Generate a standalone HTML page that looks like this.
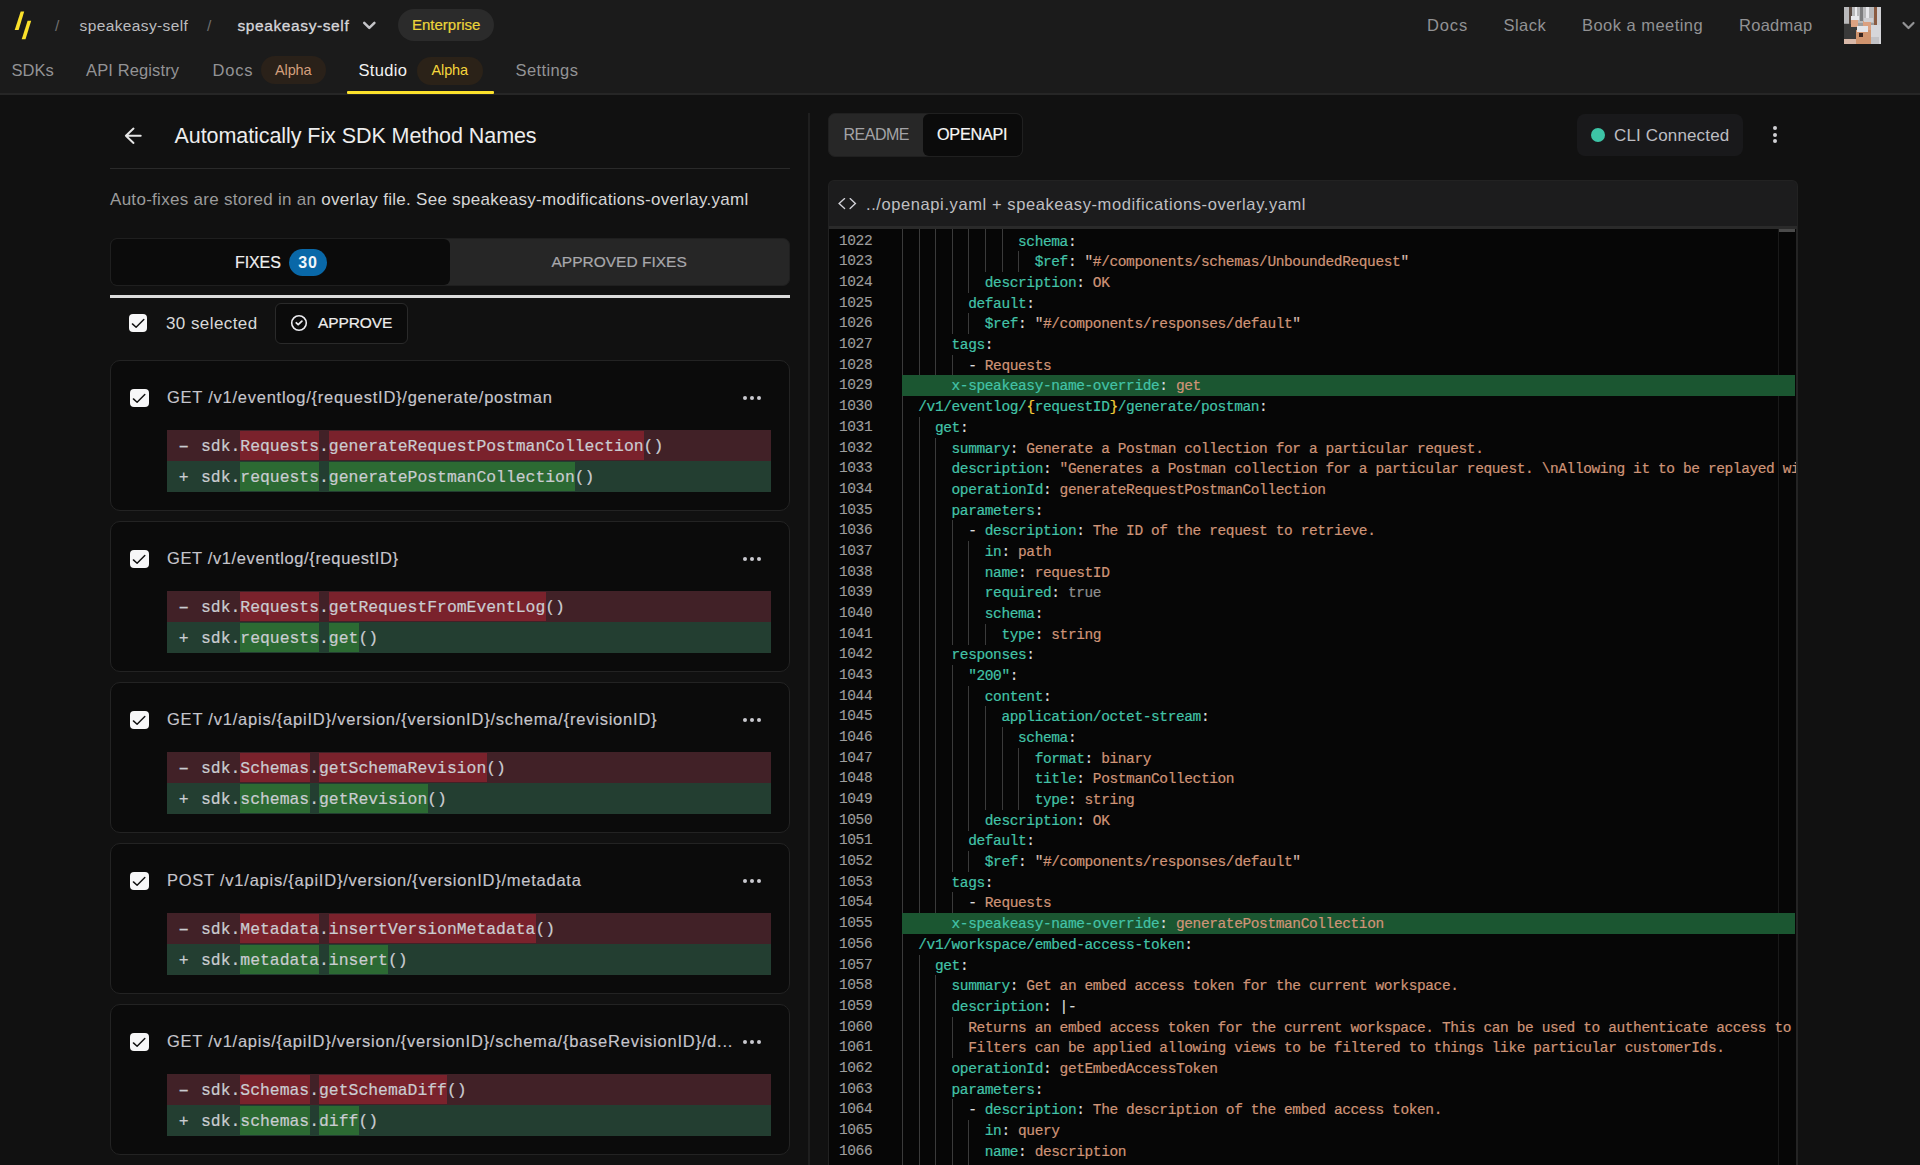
<!DOCTYPE html>
<html><head><meta charset="utf-8"><title>Speakeasy Studio</title>
<style>
*{box-sizing:border-box;margin:0;padding:0}
html,body{width:1920px;height:1165px;overflow:hidden;background:#111111;font-family:"Liberation Sans",sans-serif;}
.a{position:absolute;white-space:pre}
.top{position:absolute;left:0;top:0;width:1920px;height:93px;background:#1b1b1b}
.topb{position:absolute;left:0;top:93px;width:1920px;height:2px;background:#262626}
.t{position:absolute;white-space:pre;line-height:20px;height:20px}
.mono{font-family:"Liberation Mono",monospace}
.card{position:absolute;left:110px;width:680px;height:151px;background:#0b0b0b;border:1px solid #232323;border-radius:10px}
.cb{position:absolute;width:18.5px;height:18.3px;background:#f7f7f8;border-radius:4px}
.dots{position:absolute;width:19px;height:4px}
.dots i{position:absolute;top:0;width:4.4px;height:4.4px;border-radius:50%;background:#c9c9cf}
.diff{position:absolute;left:56px;width:604px;height:62px}
.row{position:absolute;left:0;width:604px;height:31px;font-family:"Liberation Mono",monospace;font-size:16.4px;line-height:31px;color:#caccd1;-webkit-text-stroke-width:0.2px;white-space:pre}
.rm{background:#412127}
.ad{background:#233e31}
.hr{position:absolute;top:1px;height:29px;background:#7a222c}
.hg{position:absolute;top:1px;height:29px;background:#2c6a33}
.code{position:absolute;left:829px;top:229px;width:967px;height:936px;background:#060606;overflow:hidden}
.ln{position:absolute;left:10px;width:40px;font-family:"Liberation Mono",monospace;font-size:14.5px;letter-spacing:-0.39px;-webkit-text-stroke-width:0.15px;color:#9d9d9d;white-space:pre;height:20.68px;line-height:20.68px}
.cl{position:absolute;left:73px;font-family:"Liberation Mono",monospace;font-size:14.5px;letter-spacing:-0.39px;-webkit-text-stroke-width:0.2px;color:#d4d4d4;white-space:pre;height:20.68px;line-height:20.68px}
.g{position:absolute;width:1px;background:#3a3a3a}
.k{color:#43c3a8}
.s{color:#cf9477}
.q{color:#d8bcb0}
.p{color:#dcdcdc}
.y{color:#f5cf3a}
.b{color:#8f8f8f}
</style></head>
<body>
<div class="top"></div><div class="topb"></div><svg class="a" style="left:0;top:0" width="40" height="46"><polygon points="20.7,11.5 24.2,11.5 18.65,30 14.7,30" fill="#fbe12b"/><polygon points="27.6,20.8 31.2,20.8 25.5,39.3 21.7,39.3" fill="#fbe12b"/></svg><div class="a" style="left:55px;top:13.50px;height:24px;line-height:24px;font-size:15.5px;color:#6f6f6f;letter-spacing:0px;font-weight:400;">/</div><div class="a" style="left:79.5px;top:13.50px;height:24px;line-height:24px;font-size:15.5px;color:#bcbcbf;letter-spacing:0.38px;font-weight:400;">speakeasy-self</div><div class="a" style="left:207px;top:13.50px;height:24px;line-height:24px;font-size:15.5px;color:#6f6f6f;letter-spacing:0px;font-weight:400;">/</div><div class="a" style="left:237.5px;top:13.50px;height:24px;line-height:24px;font-size:15.5px;color:#d6d6da;letter-spacing:0.6px;font-weight:400;-webkit-text-stroke:0.3px #d6d6da;">speakeasy-self</div><svg class="a" style="left:360px;top:19px" width="18" height="14"><polyline points="4.2,3.8 9.3,8.9 14.4,3.8" fill="none" stroke="#c4c4c8" stroke-width="2.5" stroke-linecap="round" stroke-linejoin="round"/></svg><div class="a" style="left:398px;top:9px;width:96px;height:32px;border-radius:16px;background:#2b2b2b"></div><div class="a" style="left:412px;top:12.80px;height:24px;line-height:24px;font-size:15px;color:#ecd53a;letter-spacing:0px;font-weight:400;-webkit-text-stroke:0.2px #ecd53a;">Enterprise</div><div class="a" style="left:1427px;top:11.50px;height:26px;line-height:26px;font-size:16.5px;color:#929294;letter-spacing:0.85px;font-weight:400;">Docs</div><div class="a" style="left:1503.5px;top:11.50px;height:26px;line-height:26px;font-size:16.5px;color:#929294;letter-spacing:0.45px;font-weight:400;">Slack</div><div class="a" style="left:1582px;top:11.50px;height:26px;line-height:26px;font-size:16.5px;color:#929294;letter-spacing:0.46px;font-weight:400;">Book a meeting</div><div class="a" style="left:1739px;top:11.50px;height:26px;line-height:26px;font-size:16.5px;color:#929294;letter-spacing:0.28px;font-weight:400;">Roadmap</div><svg class="a" style="left:1844px;top:7px" width="37" height="37" viewBox="0 0 37 37"><rect width="37" height="37" fill="#9c9c9c"/><rect x="0" y="0" width="37" height="16" fill="#b9b9bb"/><rect x="5" y="0" width="3" height="20" fill="#5a4a42"/><rect x="11" y="0" width="2" height="12" fill="#ececef"/><rect x="16" y="0" width="3" height="14" fill="#7d7d7f"/><rect x="22" y="0" width="3" height="15" fill="#e6e6ea"/><rect x="30" y="0" width="3" height="22" fill="#8a5a40"/><rect x="33" y="0" width="4" height="18" fill="#d0d0d4"/><rect x="0" y="17" width="13" height="20" fill="#3a3a3a"/><rect x="0" y="32" width="12" height="5" fill="#d8b8a8"/><rect x="7" y="9" width="8" height="4" fill="#e8e8ec"/><rect x="7" y="13" width="7" height="7" fill="#dca282"/><rect x="23" y="18" width="14" height="19" fill="#d6d6da"/><rect x="19" y="14" width="8" height="9" fill="#dba080"/><rect x="20" y="11" width="9" height="4" fill="#cfcfd3"/><rect x="12" y="23" width="15" height="14" fill="#d0946e"/><rect x="13" y="19" width="11" height="6" fill="#e4e4e8"/><rect x="15" y="26" width="4" height="4" fill="#3a2620"/><rect x="27" y="30" width="8" height="7" fill="#c2c2c6"/></svg><svg class="a" style="left:1900px;top:19px" width="18" height="14"><polyline points="3.5,4 8.5,9 13.5,4" fill="none" stroke="#939395" stroke-width="2.2" stroke-linecap="round" stroke-linejoin="round"/></svg><div class="a" style="left:11.5px;top:57.00px;height:26px;line-height:26px;font-size:16.5px;color:#939395;letter-spacing:0px;font-weight:400;">SDKs</div><div class="a" style="left:86px;top:57.00px;height:26px;line-height:26px;font-size:16.5px;color:#939395;letter-spacing:0.12px;font-weight:400;">API Registry</div><div class="a" style="left:212.5px;top:57.00px;height:26px;line-height:26px;font-size:16.5px;color:#939395;letter-spacing:0.77px;font-weight:400;">Docs</div><div class="a" style="left:261px;top:56px;width:65px;height:28px;border-radius:14px;background:#2a2119"></div><div class="a" style="left:275px;top:58.50px;height:23px;line-height:23px;font-size:14.5px;color:#d39f7d;letter-spacing:-0.12px;font-weight:400;">Alpha</div><div class="a" style="left:358.5px;top:57.00px;height:26px;line-height:26px;font-size:16.5px;color:#f2f2f2;letter-spacing:0.33px;font-weight:400;">Studio</div><div class="a" style="left:417px;top:56.5px;width:66px;height:28px;border-radius:14px;background:#2b2218"></div><div class="a" style="left:431.5px;top:58.50px;height:23px;line-height:23px;font-size:14.5px;color:#f5d53c;letter-spacing:-0.12px;font-weight:400;">Alpha</div><div class="a" style="left:515.5px;top:57.00px;height:26px;line-height:26px;font-size:16.5px;color:#939395;letter-spacing:0.4px;font-weight:400;">Settings</div><div class="a" style="left:347px;top:91px;width:147px;height:2.5px;background:#fbe12b;border-radius:1px"></div>
<svg class="a" style="left:122px;top:126px" width="22" height="20"><path d="M18.7,9.7 H3.9 M11.5,2.6 L3.9,9.7 L11.5,16.9" fill="none" stroke="#e6e6e6" stroke-width="2" stroke-linecap="round" stroke-linejoin="round"/></svg><div class="a" style="left:174.5px;top:119.00px;height:34px;line-height:34px;font-size:21.5px;color:#ededed;letter-spacing:-0.07px;font-weight:400;">Automatically Fix SDK Method Names</div><div class="a" style="left:110px;top:168px;width:680px;height:1px;background:#2a2a2a"></div><div class="a" style="left:110px;top:186px;height:28px;line-height:28px;font-size:17px;letter-spacing:0.29px;color:#9b9b9b">Auto-fixes are stored in an <span style="color:#d6d6d6">overlay file. See speakeasy-modifications-overlay.yaml</span></div><div class="a" style="left:110px;top:238px;width:680px;height:48px;border-radius:7px;background:#262626;border:1px solid #1f1f1f"></div><div class="a" style="left:111px;top:239px;width:339px;height:46px;border-radius:6px;background:#0b0b0b"></div><div class="a" style="left:235px;top:249.50px;height:25px;line-height:25px;font-size:16px;color:#efefef;letter-spacing:-0.1px;font-weight:400;-webkit-text-stroke:0.2px #efefef;">FIXES</div><div class="a" style="left:288.5px;top:249px;width:38px;height:26.5px;border-radius:13.5px;background:#0968a8"></div><div class="a" style="left:298.3px;top:249.50px;height:25px;line-height:25px;font-size:16px;color:#f2f6fa;letter-spacing:0.7px;font-weight:700;">30</div><div class="a" style="left:551.5px;top:250.00px;height:24px;line-height:24px;font-size:15.5px;color:#a8a8ac;letter-spacing:0px;font-weight:400;-webkit-text-stroke:0.2px #a8a8ac;">APPROVED FIXES</div><div class="a" style="left:110px;top:295px;width:680px;height:3px;background:#dcdcdc"></div><div class="cb" style="left:128.5px;top:313.5px"><svg width="19" height="19" style="position:absolute;left:0;top:0"><polyline points="3.4,9.9 7.1,13.3 14.8,5.6" fill="none" stroke="#111111" stroke-width="1.45" stroke-linecap="round" stroke-linejoin="round"/></svg></div><div class="a" style="left:166px;top:309.50px;height:27px;line-height:27px;font-size:17px;color:#d9d9d9;letter-spacing:0.42px;font-weight:400;">30 selected</div><div class="a" style="left:275px;top:303px;width:132.5px;height:41px;border-radius:6px;background:#0b0b0b;border:1px solid #2a2a2a"></div><svg class="a" style="left:289px;top:313.3px" width="20" height="20"><circle cx="10" cy="10" r="7.3" fill="none" stroke="#ececf0" stroke-width="1.6"/><polyline points="7.3,9.8 9.2,11.6 12.9,8.1" fill="none" stroke="#ececf0" stroke-width="1.8" stroke-linecap="round" stroke-linejoin="round"/></svg><div class="a" style="left:318px;top:311.00px;height:24px;line-height:24px;font-size:15.5px;color:#ededed;letter-spacing:-0.1px;font-weight:400;-webkit-text-stroke:0.2px #ededed;">APPROVE</div><div class="card" style="top:360px"><div class="cb" style="left:19px;top:28px"><svg width="19" height="19" style="position:absolute;left:0;top:0"><polyline points="3.4,9.9 7.1,13.3 14.8,5.6" fill="none" stroke="#111111" stroke-width="1.45" stroke-linecap="round" stroke-linejoin="round"/></svg></div><div class="a" style="left:56px;top:23.00px;height:26px;line-height:26px;font-size:16.5px;color:#c6c5cc;letter-spacing:0.75px;font-weight:400;-webkit-text-stroke:0.15px #c6c5cc;">GET /v1/eventlog/{requestID}/generate/postman</div><div class="dots" style="left:632px;top:35px"><i style="left:0"></i><i style="left:6.8px"></i><i style="left:13.6px"></i></div><div class="diff" style="top:69px"><div class="row rm" style="top:0px"><div class="hr" style="left:73.06px;width:79.32px"></div><div class="hr" style="left:161.62px;width:315.48px"></div><span style="position:absolute;left:11.82px;top:1.5px">−</span><span style="position:absolute;left:34.0px;top:0.5px">sdk.Requests.generateRequestPostmanCollection()</span></div><div class="row ad" style="top:31px"><div class="hg" style="left:73.06px;width:79.32px"></div><div class="hg" style="left:161.62px;width:246.60px"></div><span style="position:absolute;left:11.82px;top:0.5px">+</span><span style="position:absolute;left:34.0px;top:0.5px">sdk.requests.generatePostmanCollection()</span></div></div></div><div class="card" style="top:521px"><div class="cb" style="left:19px;top:28px"><svg width="19" height="19" style="position:absolute;left:0;top:0"><polyline points="3.4,9.9 7.1,13.3 14.8,5.6" fill="none" stroke="#111111" stroke-width="1.45" stroke-linecap="round" stroke-linejoin="round"/></svg></div><div class="a" style="left:56px;top:23.00px;height:26px;line-height:26px;font-size:16.5px;color:#c6c5cc;letter-spacing:0.62px;font-weight:400;-webkit-text-stroke:0.15px #c6c5cc;">GET /v1/eventlog/{requestID}</div><div class="dots" style="left:632px;top:35px"><i style="left:0"></i><i style="left:6.8px"></i><i style="left:13.6px"></i></div><div class="diff" style="top:69px"><div class="row rm" style="top:0px"><div class="hr" style="left:73.06px;width:79.32px"></div><div class="hr" style="left:161.62px;width:217.08px"></div><span style="position:absolute;left:11.82px;top:1.5px">−</span><span style="position:absolute;left:34.0px;top:0.5px">sdk.Requests.getRequestFromEventLog()</span></div><div class="row ad" style="top:31px"><div class="hg" style="left:73.06px;width:79.32px"></div><div class="hg" style="left:161.62px;width:30.12px"></div><span style="position:absolute;left:11.82px;top:0.5px">+</span><span style="position:absolute;left:34.0px;top:0.5px">sdk.requests.get()</span></div></div></div><div class="card" style="top:682px"><div class="cb" style="left:19px;top:28px"><svg width="19" height="19" style="position:absolute;left:0;top:0"><polyline points="3.4,9.9 7.1,13.3 14.8,5.6" fill="none" stroke="#111111" stroke-width="1.45" stroke-linecap="round" stroke-linejoin="round"/></svg></div><div class="a" style="left:56px;top:23.00px;height:26px;line-height:26px;font-size:16.5px;color:#c6c5cc;letter-spacing:0.78px;font-weight:400;-webkit-text-stroke:0.15px #c6c5cc;">GET /v1/apis/{apiID}/version/{versionID}/schema/{revisionID}</div><div class="dots" style="left:632px;top:35px"><i style="left:0"></i><i style="left:6.8px"></i><i style="left:13.6px"></i></div><div class="diff" style="top:69px"><div class="row rm" style="top:0px"><div class="hr" style="left:73.06px;width:69.48px"></div><div class="hr" style="left:151.78px;width:167.88px"></div><span style="position:absolute;left:11.82px;top:1.5px">−</span><span style="position:absolute;left:34.0px;top:0.5px">sdk.Schemas.getSchemaRevision()</span></div><div class="row ad" style="top:31px"><div class="hg" style="left:73.06px;width:69.48px"></div><div class="hg" style="left:151.78px;width:108.84px"></div><span style="position:absolute;left:11.82px;top:0.5px">+</span><span style="position:absolute;left:34.0px;top:0.5px">sdk.schemas.getRevision()</span></div></div></div><div class="card" style="top:843px"><div class="cb" style="left:19px;top:28px"><svg width="19" height="19" style="position:absolute;left:0;top:0"><polyline points="3.4,9.9 7.1,13.3 14.8,5.6" fill="none" stroke="#111111" stroke-width="1.45" stroke-linecap="round" stroke-linejoin="round"/></svg></div><div class="a" style="left:56px;top:23.00px;height:26px;line-height:26px;font-size:16.5px;color:#c6c5cc;letter-spacing:0.76px;font-weight:400;-webkit-text-stroke:0.15px #c6c5cc;">POST /v1/apis/{apiID}/version/{versionID}/metadata</div><div class="dots" style="left:632px;top:35px"><i style="left:0"></i><i style="left:6.8px"></i><i style="left:13.6px"></i></div><div class="diff" style="top:69px"><div class="row rm" style="top:0px"><div class="hr" style="left:73.06px;width:79.32px"></div><div class="hr" style="left:161.62px;width:207.24px"></div><span style="position:absolute;left:11.82px;top:1.5px">−</span><span style="position:absolute;left:34.0px;top:0.5px">sdk.Metadata.insertVersionMetadata()</span></div><div class="row ad" style="top:31px"><div class="hg" style="left:73.06px;width:79.32px"></div><div class="hg" style="left:161.62px;width:59.64px"></div><span style="position:absolute;left:11.82px;top:0.5px">+</span><span style="position:absolute;left:34.0px;top:0.5px">sdk.metadata.insert()</span></div></div></div><div class="card" style="top:1004px"><div class="cb" style="left:19px;top:28px"><svg width="19" height="19" style="position:absolute;left:0;top:0"><polyline points="3.4,9.9 7.1,13.3 14.8,5.6" fill="none" stroke="#111111" stroke-width="1.45" stroke-linecap="round" stroke-linejoin="round"/></svg></div><div class="a" style="left:56px;top:23.00px;height:26px;line-height:26px;font-size:16.5px;color:#c6c5cc;letter-spacing:0.765px;font-weight:400;-webkit-text-stroke:0.15px #c6c5cc;">GET /v1/apis/{apiID}/version/{versionID}/schema/{baseRevisionID}/d...</div><div class="dots" style="left:632px;top:35px"><i style="left:0"></i><i style="left:6.8px"></i><i style="left:13.6px"></i></div><div class="diff" style="top:69px"><div class="row rm" style="top:0px"><div class="hr" style="left:73.06px;width:69.48px"></div><div class="hr" style="left:151.78px;width:128.52px"></div><span style="position:absolute;left:11.82px;top:1.5px">−</span><span style="position:absolute;left:34.0px;top:0.5px">sdk.Schemas.getSchemaDiff()</span></div><div class="row ad" style="top:31px"><div class="hg" style="left:73.06px;width:69.48px"></div><div class="hg" style="left:151.78px;width:39.96px"></div><span style="position:absolute;left:11.82px;top:0.5px">+</span><span style="position:absolute;left:34.0px;top:0.5px">sdk.schemas.diff()</span></div></div></div><div class="a" style="left:808px;top:113px;width:2px;height:1052px;background:#1f1f1f"></div>
<div class="a" style="left:828px;top:113px;width:194.5px;height:43.5px;border-radius:7px;background:#272727;border:1px solid #202020"></div><div class="a" style="left:923px;top:114px;width:98.5px;height:41.5px;border-radius:6px;background:#0b0b0b"></div><div class="a" style="left:843.5px;top:122.00px;height:25px;line-height:25px;font-size:16px;color:#a3a3a6;letter-spacing:-0.5px;font-weight:400;">README</div><div class="a" style="left:937px;top:122.00px;height:25px;line-height:25px;font-size:16.2px;color:#f7f7f7;letter-spacing:-0.25px;font-weight:400;-webkit-text-stroke:0.2px #f7f7f7;">OPENAPI</div><div class="a" style="left:1577px;top:114px;width:166px;height:41.5px;border-radius:8px;background:#19191b"></div><div class="a" style="left:1591px;top:127.6px;width:14px;height:14px;border-radius:50%;background:#3dc4a6"></div><div class="a" style="left:1614px;top:121.50px;height:27px;line-height:27px;font-size:17px;color:#bdbdc1;letter-spacing:0.15px;font-weight:400;">CLI Connected</div><div class="a" style="left:1772.8px;top:125.8px;width:4.4px;height:4.4px;border-radius:50%;background:#d0d0d4"></div><div class="a" style="left:1772.8px;top:132.5px;width:4.4px;height:4.4px;border-radius:50%;background:#d0d0d4"></div><div class="a" style="left:1772.8px;top:139.1px;width:4.4px;height:4.4px;border-radius:50%;background:#d0d0d4"></div><div class="a" style="left:828px;top:180px;width:970px;height:49px;border-radius:6px 6px 0 0;background:#1c1c1d;border:1px solid #222;border-bottom:none"></div><div class="a" style="left:829px;top:226px;width:968px;height:3px;background:#2a2a2a"></div><svg class="a" style="left:836px;top:196px" width="24" height="16"><polyline points="8.6,2.6 3.1,7.5 8.6,12.6" fill="none" stroke="#d2d2d8" stroke-width="1.35" stroke-linecap="round" stroke-linejoin="miter"/><polyline points="14.1,2.6 19.4,7.5 14.1,12.6" fill="none" stroke="#d2d2d8" stroke-width="1.35" stroke-linecap="round" stroke-linejoin="miter"/></svg><div class="a" style="left:866px;top:191.00px;height:26px;line-height:26px;font-size:16.5px;color:#bfbfc2;letter-spacing:0.59px;font-weight:400;">../openapi.yaml + speakeasy-modifications-overlay.yaml</div><div class="a" style="left:828px;top:229px;width:1px;height:936px;background:#222"></div><div class="a" style="left:1796px;top:229px;width:1.5px;height:936px;background:#242424"></div><div class="code"><div class="a" style="left:949px;top:0;width:1px;height:936px;background:#1a1a1a"></div><div class="a" style="left:950px;top:0;width:16px;height:2.5px;background:#4a4a4a"></div><div class="g" style="left:73.00px;top:0.00px;height:22.68px"></div><div class="g" style="left:89.62px;top:0.00px;height:22.68px"></div><div class="g" style="left:106.24px;top:0.00px;height:22.68px"></div><div class="g" style="left:122.86px;top:0.00px;height:22.68px"></div><div class="g" style="left:139.48px;top:0.00px;height:22.68px"></div><div class="g" style="left:156.10px;top:0.00px;height:22.68px"></div><div class="g" style="left:172.72px;top:0.00px;height:22.68px"></div><div class="ln" style="top:1.70px">1022</div><div class="cl" style="left:189.04px;top:2.70px"><span class="k">schema</span><span class="p">:</span></div><div class="g" style="left:73.00px;top:22.38px;height:20.98px"></div><div class="g" style="left:89.62px;top:22.38px;height:20.98px"></div><div class="g" style="left:106.24px;top:22.38px;height:20.98px"></div><div class="g" style="left:122.86px;top:22.38px;height:20.98px"></div><div class="g" style="left:139.48px;top:22.38px;height:20.98px"></div><div class="g" style="left:156.10px;top:22.38px;height:20.98px"></div><div class="g" style="left:172.72px;top:22.38px;height:20.98px"></div><div class="g" style="left:189.34px;top:22.38px;height:20.98px"></div><div class="ln" style="top:22.38px">1023</div><div class="cl" style="left:205.66px;top:23.38px"><span class="k">$ref</span><span class="p">:</span><span class="p"> </span><span class="q">&quot;</span><span class="s">#/components/schemas/UnboundedRequest</span><span class="q">&quot;</span></div><div class="g" style="left:73.00px;top:43.06px;height:20.98px"></div><div class="g" style="left:89.62px;top:43.06px;height:20.98px"></div><div class="g" style="left:106.24px;top:43.06px;height:20.98px"></div><div class="g" style="left:122.86px;top:43.06px;height:20.98px"></div><div class="g" style="left:139.48px;top:43.06px;height:20.98px"></div><div class="ln" style="top:43.06px">1024</div><div class="cl" style="left:155.80px;top:44.06px"><span class="k">description</span><span class="p">:</span><span class="p"> </span><span class="s">OK</span></div><div class="g" style="left:73.00px;top:63.74px;height:20.98px"></div><div class="g" style="left:89.62px;top:63.74px;height:20.98px"></div><div class="g" style="left:106.24px;top:63.74px;height:20.98px"></div><div class="g" style="left:122.86px;top:63.74px;height:20.98px"></div><div class="ln" style="top:63.74px">1025</div><div class="cl" style="left:139.18px;top:64.74px"><span class="k">default</span><span class="p">:</span></div><div class="g" style="left:73.00px;top:84.42px;height:20.98px"></div><div class="g" style="left:89.62px;top:84.42px;height:20.98px"></div><div class="g" style="left:106.24px;top:84.42px;height:20.98px"></div><div class="g" style="left:122.86px;top:84.42px;height:20.98px"></div><div class="g" style="left:139.48px;top:84.42px;height:20.98px"></div><div class="ln" style="top:84.42px">1026</div><div class="cl" style="left:155.80px;top:85.42px"><span class="k">$ref</span><span class="p">:</span><span class="p"> </span><span class="q">&quot;</span><span class="s">#/components/responses/default</span><span class="q">&quot;</span></div><div class="g" style="left:73.00px;top:105.10px;height:20.98px"></div><div class="g" style="left:89.62px;top:105.10px;height:20.98px"></div><div class="g" style="left:106.24px;top:105.10px;height:20.98px"></div><div class="ln" style="top:105.10px">1027</div><div class="cl" style="left:122.56px;top:106.10px"><span class="k">tags</span><span class="p">:</span></div><div class="g" style="left:73.00px;top:125.78px;height:20.98px"></div><div class="g" style="left:89.62px;top:125.78px;height:20.98px"></div><div class="g" style="left:106.24px;top:125.78px;height:20.98px"></div><div class="g" style="left:122.86px;top:125.78px;height:20.98px"></div><div class="ln" style="top:125.78px">1028</div><div class="cl" style="left:139.18px;top:126.78px"><span class="p">- </span><span class="s">Requests</span></div><div class="a" style="left:73.0px;top:146.46px;width:893px;height:20.68px;background:#1b5631"></div><div class="ln" style="top:146.46px">1029</div><div class="cl" style="left:122.56px;top:147.46px"><span class="k">x-speakeasy-name-override</span><span class="p">:</span><span class="p"> </span><span class="s">get</span></div><div class="g" style="left:73.00px;top:167.14px;height:20.98px"></div><div class="ln" style="top:167.14px">1030</div><div class="cl" style="left:89.32px;top:168.14px"><span class="k">/v1/eventlog/</span><span class="y">{</span><span class="k">requestID</span><span class="y">}</span><span class="k">/generate/postman</span><span class="p">:</span></div><div class="g" style="left:73.00px;top:187.82px;height:20.98px"></div><div class="g" style="left:89.62px;top:187.82px;height:20.98px"></div><div class="ln" style="top:187.82px">1031</div><div class="cl" style="left:105.94px;top:188.82px"><span class="k">get</span><span class="p">:</span></div><div class="g" style="left:73.00px;top:208.50px;height:20.98px"></div><div class="g" style="left:89.62px;top:208.50px;height:20.98px"></div><div class="g" style="left:106.24px;top:208.50px;height:20.98px"></div><div class="ln" style="top:208.50px">1032</div><div class="cl" style="left:122.56px;top:209.50px"><span class="k">summary</span><span class="p">:</span><span class="p"> </span><span class="s">Generate a Postman collection for a particular request.</span></div><div class="g" style="left:73.00px;top:229.18px;height:20.98px"></div><div class="g" style="left:89.62px;top:229.18px;height:20.98px"></div><div class="g" style="left:106.24px;top:229.18px;height:20.98px"></div><div class="ln" style="top:229.18px">1033</div><div class="cl" style="left:122.56px;top:230.18px"><span class="k">description</span><span class="p">:</span><span class="p"> </span><span class="s">&quot;Generates a Postman collection for a particular request. \nAllowing it to be replayed with the original request details.</span></div><div class="g" style="left:73.00px;top:249.86px;height:20.98px"></div><div class="g" style="left:89.62px;top:249.86px;height:20.98px"></div><div class="g" style="left:106.24px;top:249.86px;height:20.98px"></div><div class="ln" style="top:249.86px">1034</div><div class="cl" style="left:122.56px;top:250.86px"><span class="k">operationId</span><span class="p">:</span><span class="p"> </span><span class="s">generateRequestPostmanCollection</span></div><div class="g" style="left:73.00px;top:270.54px;height:20.98px"></div><div class="g" style="left:89.62px;top:270.54px;height:20.98px"></div><div class="g" style="left:106.24px;top:270.54px;height:20.98px"></div><div class="ln" style="top:270.54px">1035</div><div class="cl" style="left:122.56px;top:271.54px"><span class="k">parameters</span><span class="p">:</span></div><div class="g" style="left:73.00px;top:291.22px;height:20.98px"></div><div class="g" style="left:89.62px;top:291.22px;height:20.98px"></div><div class="g" style="left:106.24px;top:291.22px;height:20.98px"></div><div class="g" style="left:122.86px;top:291.22px;height:20.98px"></div><div class="ln" style="top:291.22px">1036</div><div class="cl" style="left:139.18px;top:292.22px"><span class="p">- </span><span class="k">description</span><span class="p">:</span><span class="p"> </span><span class="s">The ID of the request to retrieve.</span></div><div class="g" style="left:73.00px;top:311.90px;height:20.98px"></div><div class="g" style="left:89.62px;top:311.90px;height:20.98px"></div><div class="g" style="left:106.24px;top:311.90px;height:20.98px"></div><div class="g" style="left:122.86px;top:311.90px;height:20.98px"></div><div class="g" style="left:139.48px;top:311.90px;height:20.98px"></div><div class="ln" style="top:311.90px">1037</div><div class="cl" style="left:155.80px;top:312.90px"><span class="k">in</span><span class="p">:</span><span class="p"> </span><span class="s">path</span></div><div class="g" style="left:73.00px;top:332.58px;height:20.98px"></div><div class="g" style="left:89.62px;top:332.58px;height:20.98px"></div><div class="g" style="left:106.24px;top:332.58px;height:20.98px"></div><div class="g" style="left:122.86px;top:332.58px;height:20.98px"></div><div class="g" style="left:139.48px;top:332.58px;height:20.98px"></div><div class="ln" style="top:332.58px">1038</div><div class="cl" style="left:155.80px;top:333.58px"><span class="k">name</span><span class="p">:</span><span class="p"> </span><span class="s">requestID</span></div><div class="g" style="left:73.00px;top:353.26px;height:20.98px"></div><div class="g" style="left:89.62px;top:353.26px;height:20.98px"></div><div class="g" style="left:106.24px;top:353.26px;height:20.98px"></div><div class="g" style="left:122.86px;top:353.26px;height:20.98px"></div><div class="g" style="left:139.48px;top:353.26px;height:20.98px"></div><div class="ln" style="top:353.26px">1039</div><div class="cl" style="left:155.80px;top:354.26px"><span class="k">required</span><span class="p">:</span><span class="p"> </span><span class="b">true</span></div><div class="g" style="left:73.00px;top:373.94px;height:20.98px"></div><div class="g" style="left:89.62px;top:373.94px;height:20.98px"></div><div class="g" style="left:106.24px;top:373.94px;height:20.98px"></div><div class="g" style="left:122.86px;top:373.94px;height:20.98px"></div><div class="g" style="left:139.48px;top:373.94px;height:20.98px"></div><div class="ln" style="top:373.94px">1040</div><div class="cl" style="left:155.80px;top:374.94px"><span class="k">schema</span><span class="p">:</span></div><div class="g" style="left:73.00px;top:394.62px;height:20.98px"></div><div class="g" style="left:89.62px;top:394.62px;height:20.98px"></div><div class="g" style="left:106.24px;top:394.62px;height:20.98px"></div><div class="g" style="left:122.86px;top:394.62px;height:20.98px"></div><div class="g" style="left:139.48px;top:394.62px;height:20.98px"></div><div class="g" style="left:156.10px;top:394.62px;height:20.98px"></div><div class="ln" style="top:394.62px">1041</div><div class="cl" style="left:172.42px;top:395.62px"><span class="k">type</span><span class="p">:</span><span class="p"> </span><span class="s">string</span></div><div class="g" style="left:73.00px;top:415.30px;height:20.98px"></div><div class="g" style="left:89.62px;top:415.30px;height:20.98px"></div><div class="g" style="left:106.24px;top:415.30px;height:20.98px"></div><div class="ln" style="top:415.30px">1042</div><div class="cl" style="left:122.56px;top:416.30px"><span class="k">responses</span><span class="p">:</span></div><div class="g" style="left:73.00px;top:435.98px;height:20.98px"></div><div class="g" style="left:89.62px;top:435.98px;height:20.98px"></div><div class="g" style="left:106.24px;top:435.98px;height:20.98px"></div><div class="g" style="left:122.86px;top:435.98px;height:20.98px"></div><div class="ln" style="top:435.98px">1043</div><div class="cl" style="left:139.18px;top:436.98px"><span class="k">&quot;200&quot;</span><span class="p">:</span></div><div class="g" style="left:73.00px;top:456.66px;height:20.98px"></div><div class="g" style="left:89.62px;top:456.66px;height:20.98px"></div><div class="g" style="left:106.24px;top:456.66px;height:20.98px"></div><div class="g" style="left:122.86px;top:456.66px;height:20.98px"></div><div class="g" style="left:139.48px;top:456.66px;height:20.98px"></div><div class="ln" style="top:456.66px">1044</div><div class="cl" style="left:155.80px;top:457.66px"><span class="k">content</span><span class="p">:</span></div><div class="g" style="left:73.00px;top:477.34px;height:20.98px"></div><div class="g" style="left:89.62px;top:477.34px;height:20.98px"></div><div class="g" style="left:106.24px;top:477.34px;height:20.98px"></div><div class="g" style="left:122.86px;top:477.34px;height:20.98px"></div><div class="g" style="left:139.48px;top:477.34px;height:20.98px"></div><div class="g" style="left:156.10px;top:477.34px;height:20.98px"></div><div class="ln" style="top:477.34px">1045</div><div class="cl" style="left:172.42px;top:478.34px"><span class="k">application/octet-stream</span><span class="p">:</span></div><div class="g" style="left:73.00px;top:498.02px;height:20.98px"></div><div class="g" style="left:89.62px;top:498.02px;height:20.98px"></div><div class="g" style="left:106.24px;top:498.02px;height:20.98px"></div><div class="g" style="left:122.86px;top:498.02px;height:20.98px"></div><div class="g" style="left:139.48px;top:498.02px;height:20.98px"></div><div class="g" style="left:156.10px;top:498.02px;height:20.98px"></div><div class="g" style="left:172.72px;top:498.02px;height:20.98px"></div><div class="ln" style="top:498.02px">1046</div><div class="cl" style="left:189.04px;top:499.02px"><span class="k">schema</span><span class="p">:</span></div><div class="g" style="left:73.00px;top:518.70px;height:20.98px"></div><div class="g" style="left:89.62px;top:518.70px;height:20.98px"></div><div class="g" style="left:106.24px;top:518.70px;height:20.98px"></div><div class="g" style="left:122.86px;top:518.70px;height:20.98px"></div><div class="g" style="left:139.48px;top:518.70px;height:20.98px"></div><div class="g" style="left:156.10px;top:518.70px;height:20.98px"></div><div class="g" style="left:172.72px;top:518.70px;height:20.98px"></div><div class="g" style="left:189.34px;top:518.70px;height:20.98px"></div><div class="ln" style="top:518.70px">1047</div><div class="cl" style="left:205.66px;top:519.70px"><span class="k">format</span><span class="p">:</span><span class="p"> </span><span class="s">binary</span></div><div class="g" style="left:73.00px;top:539.38px;height:20.98px"></div><div class="g" style="left:89.62px;top:539.38px;height:20.98px"></div><div class="g" style="left:106.24px;top:539.38px;height:20.98px"></div><div class="g" style="left:122.86px;top:539.38px;height:20.98px"></div><div class="g" style="left:139.48px;top:539.38px;height:20.98px"></div><div class="g" style="left:156.10px;top:539.38px;height:20.98px"></div><div class="g" style="left:172.72px;top:539.38px;height:20.98px"></div><div class="g" style="left:189.34px;top:539.38px;height:20.98px"></div><div class="ln" style="top:539.38px">1048</div><div class="cl" style="left:205.66px;top:540.38px"><span class="k">title</span><span class="p">:</span><span class="p"> </span><span class="s">PostmanCollection</span></div><div class="g" style="left:73.00px;top:560.06px;height:20.98px"></div><div class="g" style="left:89.62px;top:560.06px;height:20.98px"></div><div class="g" style="left:106.24px;top:560.06px;height:20.98px"></div><div class="g" style="left:122.86px;top:560.06px;height:20.98px"></div><div class="g" style="left:139.48px;top:560.06px;height:20.98px"></div><div class="g" style="left:156.10px;top:560.06px;height:20.98px"></div><div class="g" style="left:172.72px;top:560.06px;height:20.98px"></div><div class="g" style="left:189.34px;top:560.06px;height:20.98px"></div><div class="ln" style="top:560.06px">1049</div><div class="cl" style="left:205.66px;top:561.06px"><span class="k">type</span><span class="p">:</span><span class="p"> </span><span class="s">string</span></div><div class="g" style="left:73.00px;top:580.74px;height:20.98px"></div><div class="g" style="left:89.62px;top:580.74px;height:20.98px"></div><div class="g" style="left:106.24px;top:580.74px;height:20.98px"></div><div class="g" style="left:122.86px;top:580.74px;height:20.98px"></div><div class="g" style="left:139.48px;top:580.74px;height:20.98px"></div><div class="ln" style="top:580.74px">1050</div><div class="cl" style="left:155.80px;top:581.74px"><span class="k">description</span><span class="p">:</span><span class="p"> </span><span class="s">OK</span></div><div class="g" style="left:73.00px;top:601.42px;height:20.98px"></div><div class="g" style="left:89.62px;top:601.42px;height:20.98px"></div><div class="g" style="left:106.24px;top:601.42px;height:20.98px"></div><div class="g" style="left:122.86px;top:601.42px;height:20.98px"></div><div class="ln" style="top:601.42px">1051</div><div class="cl" style="left:139.18px;top:602.42px"><span class="k">default</span><span class="p">:</span></div><div class="g" style="left:73.00px;top:622.10px;height:20.98px"></div><div class="g" style="left:89.62px;top:622.10px;height:20.98px"></div><div class="g" style="left:106.24px;top:622.10px;height:20.98px"></div><div class="g" style="left:122.86px;top:622.10px;height:20.98px"></div><div class="g" style="left:139.48px;top:622.10px;height:20.98px"></div><div class="ln" style="top:622.10px">1052</div><div class="cl" style="left:155.80px;top:623.10px"><span class="k">$ref</span><span class="p">:</span><span class="p"> </span><span class="q">&quot;</span><span class="s">#/components/responses/default</span><span class="q">&quot;</span></div><div class="g" style="left:73.00px;top:642.78px;height:20.98px"></div><div class="g" style="left:89.62px;top:642.78px;height:20.98px"></div><div class="g" style="left:106.24px;top:642.78px;height:20.98px"></div><div class="ln" style="top:642.78px">1053</div><div class="cl" style="left:122.56px;top:643.78px"><span class="k">tags</span><span class="p">:</span></div><div class="g" style="left:73.00px;top:663.46px;height:20.98px"></div><div class="g" style="left:89.62px;top:663.46px;height:20.98px"></div><div class="g" style="left:106.24px;top:663.46px;height:20.98px"></div><div class="g" style="left:122.86px;top:663.46px;height:20.98px"></div><div class="ln" style="top:663.46px">1054</div><div class="cl" style="left:139.18px;top:664.46px"><span class="p">- </span><span class="s">Requests</span></div><div class="a" style="left:73.0px;top:684.14px;width:893px;height:20.68px;background:#1b5631"></div><div class="ln" style="top:684.14px">1055</div><div class="cl" style="left:122.56px;top:685.14px"><span class="k">x-speakeasy-name-override</span><span class="p">:</span><span class="p"> </span><span class="s">generatePostmanCollection</span></div><div class="g" style="left:73.00px;top:704.82px;height:20.98px"></div><div class="ln" style="top:704.82px">1056</div><div class="cl" style="left:89.32px;top:705.82px"><span class="k">/v1/workspace/embed-access-token</span><span class="p">:</span></div><div class="g" style="left:73.00px;top:725.50px;height:20.98px"></div><div class="g" style="left:89.62px;top:725.50px;height:20.98px"></div><div class="ln" style="top:725.50px">1057</div><div class="cl" style="left:105.94px;top:726.50px"><span class="k">get</span><span class="p">:</span></div><div class="g" style="left:73.00px;top:746.18px;height:20.98px"></div><div class="g" style="left:89.62px;top:746.18px;height:20.98px"></div><div class="g" style="left:106.24px;top:746.18px;height:20.98px"></div><div class="ln" style="top:746.18px">1058</div><div class="cl" style="left:122.56px;top:747.18px"><span class="k">summary</span><span class="p">:</span><span class="p"> </span><span class="s">Get an embed access token for the current workspace.</span></div><div class="g" style="left:73.00px;top:766.86px;height:20.98px"></div><div class="g" style="left:89.62px;top:766.86px;height:20.98px"></div><div class="g" style="left:106.24px;top:766.86px;height:20.98px"></div><div class="ln" style="top:766.86px">1059</div><div class="cl" style="left:122.56px;top:767.86px"><span class="k">description</span><span class="p">:</span><span class="p"> </span><span class="p">|-</span></div><div class="g" style="left:73.00px;top:787.54px;height:20.98px"></div><div class="g" style="left:89.62px;top:787.54px;height:20.98px"></div><div class="g" style="left:106.24px;top:787.54px;height:20.98px"></div><div class="g" style="left:122.86px;top:787.54px;height:20.98px"></div><div class="ln" style="top:787.54px">1060</div><div class="cl" style="left:139.18px;top:788.54px"><span class="s">Returns an embed access token for the current workspace. This can be used to authenticate access to a workspace.</span></div><div class="g" style="left:73.00px;top:808.22px;height:20.98px"></div><div class="g" style="left:89.62px;top:808.22px;height:20.98px"></div><div class="g" style="left:106.24px;top:808.22px;height:20.98px"></div><div class="g" style="left:122.86px;top:808.22px;height:20.98px"></div><div class="ln" style="top:808.22px">1061</div><div class="cl" style="left:139.18px;top:809.22px"><span class="s">Filters can be applied allowing views to be filtered to things like particular customerIds.</span></div><div class="g" style="left:73.00px;top:828.90px;height:20.98px"></div><div class="g" style="left:89.62px;top:828.90px;height:20.98px"></div><div class="g" style="left:106.24px;top:828.90px;height:20.98px"></div><div class="ln" style="top:828.90px">1062</div><div class="cl" style="left:122.56px;top:829.90px"><span class="k">operationId</span><span class="p">:</span><span class="p"> </span><span class="s">getEmbedAccessToken</span></div><div class="g" style="left:73.00px;top:849.58px;height:20.98px"></div><div class="g" style="left:89.62px;top:849.58px;height:20.98px"></div><div class="g" style="left:106.24px;top:849.58px;height:20.98px"></div><div class="ln" style="top:849.58px">1063</div><div class="cl" style="left:122.56px;top:850.58px"><span class="k">parameters</span><span class="p">:</span></div><div class="g" style="left:73.00px;top:870.26px;height:20.98px"></div><div class="g" style="left:89.62px;top:870.26px;height:20.98px"></div><div class="g" style="left:106.24px;top:870.26px;height:20.98px"></div><div class="g" style="left:122.86px;top:870.26px;height:20.98px"></div><div class="ln" style="top:870.26px">1064</div><div class="cl" style="left:139.18px;top:871.26px"><span class="p">- </span><span class="k">description</span><span class="p">:</span><span class="p"> </span><span class="s">The description of the embed access token.</span></div><div class="g" style="left:73.00px;top:890.94px;height:20.98px"></div><div class="g" style="left:89.62px;top:890.94px;height:20.98px"></div><div class="g" style="left:106.24px;top:890.94px;height:20.98px"></div><div class="g" style="left:122.86px;top:890.94px;height:20.98px"></div><div class="g" style="left:139.48px;top:890.94px;height:20.98px"></div><div class="ln" style="top:890.94px">1065</div><div class="cl" style="left:155.80px;top:891.94px"><span class="k">in</span><span class="p">:</span><span class="p"> </span><span class="s">query</span></div><div class="g" style="left:73.00px;top:911.62px;height:20.98px"></div><div class="g" style="left:89.62px;top:911.62px;height:20.98px"></div><div class="g" style="left:106.24px;top:911.62px;height:20.98px"></div><div class="g" style="left:122.86px;top:911.62px;height:20.98px"></div><div class="g" style="left:139.48px;top:911.62px;height:20.98px"></div><div class="ln" style="top:911.62px">1066</div><div class="cl" style="left:155.80px;top:912.62px"><span class="k">name</span><span class="p">:</span><span class="p"> </span><span class="s">description</span></div><div class="g" style="left:73.00px;top:932.30px;height:20.98px"></div><div class="g" style="left:89.62px;top:932.30px;height:20.98px"></div><div class="g" style="left:106.24px;top:932.30px;height:20.98px"></div><div class="g" style="left:122.86px;top:932.30px;height:20.98px"></div><div class="g" style="left:139.48px;top:932.30px;height:20.98px"></div><div class="ln" style="top:932.30px">1067</div><div class="cl" style="left:155.80px;top:933.30px"><span class="k">required</span><span class="p">:</span><span class="p"> </span><span class="b">false</span></div></div>
</body></html>
